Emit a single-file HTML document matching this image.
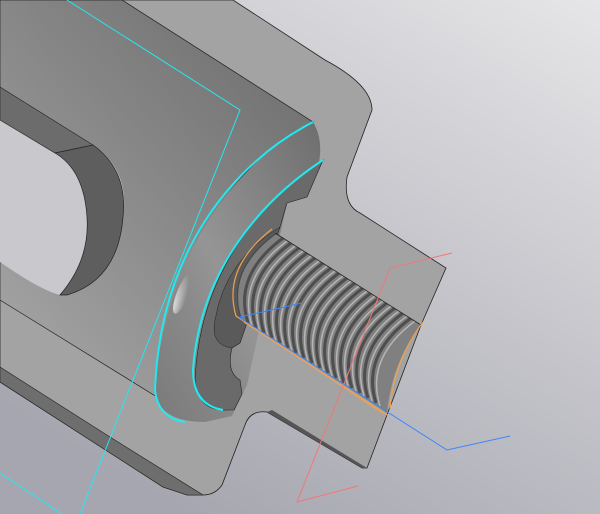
<!DOCTYPE html>
<html><head><style>html,body{margin:0;padding:0;overflow:hidden}svg{display:block}</style></head>
<body>
<svg width="600" height="514" viewBox="0 0 600 514" xmlns="http://www.w3.org/2000/svg">
<defs>
<linearGradient id="bg" x1="1" y1="0" x2="0.3" y2="1">
<stop offset="0" stop-color="#e6e6e8"/><stop offset="0.5" stop-color="#c4c4ca"/><stop offset="1" stop-color="#a6a6b0"/>
</linearGradient>
<linearGradient id="top" x1="0.8" y1="0.1" x2="0.1" y2="0.9">
<stop offset="0" stop-color="#737373"/><stop offset="1" stop-color="#a2a2a2"/>
</linearGradient>
<linearGradient id="ring" x1="1" y1="0" x2="0" y2="1">
<stop offset="0" stop-color="#6e6e6e"/><stop offset="0.55" stop-color="#959595"/><stop offset="0.7" stop-color="#8a8a8a"/><stop offset="1" stop-color="#7a7a7a"/>
</linearGradient>
<radialGradient id="hl" cx="0" cy="0" r="1">
<stop offset="0" stop-color="#f4f4f4"/><stop offset="1" stop-color="#f0f0f0" stop-opacity="0"/>
</radialGradient>
<clipPath id="bore"><path d="M275,233 L421,325 Q392,362 387,413 L240,318 Q225,270 275,233Z"/></clipPath>
</defs>
<rect width="600" height="514" fill="url(#bg)"/>
<path d="M0,0 L233,0 L325,60 Q372,85 372,110 L347,177 Q343,205 360,213 L446,268 L421,325 L387,415 L367,468 L362,468 L267,412 Q250,410 245,425 L222,485 Q215,495 203,495 L187,495 L163,487 L0,382Z" fill="#a3a3a3" stroke="#222" stroke-width="0.8"/>
<path d="M0,367 L110,437 L203,495 L187,495 L163,487 L0,382Z" fill="#6e6e6e" stroke="#222" stroke-width="0.6"/>
<path d="M267,412 L362,468 L367,468 L272,410Z" fill="#555"/>
<path d="M0,0 L122,0 L313,122 C250,150 170,240 157,397 L0,300Z" fill="url(#top)" stroke="#222" stroke-width="0.7"/>
<path d="M0,87 L93,145 Q130,170 123,217 Q115,280 67,295 L60,295 Q40,290 0,262Z" fill="#c8c8cd"/>
<path d="M0,87 L93,145 L55,153 L0,120Z" fill="#6c6c6c" stroke="#222" stroke-width="0.6"/>
<path d="M55,153 L93,145 Q128,170 123,217 Q118,280 67,295 L60,295 Q90,260 87,217 Q84,170 55,153Z" fill="#5e5e5e" stroke="#222" stroke-width="0.7"/>
<path d="M313,122 C240,160 165,250 155,390 Q158,422 205,422 L232,416 L247,385 L287,203 L307,197 Q330,150 313,122Z" fill="url(#ring)"/>
<ellipse cx="0" cy="0" rx="1" ry="1" fill="url(#hl)" transform="translate(183,293) rotate(-68) scale(22,6)"/>
<path d="M323,160 C262,200 200,270 195,380 Q198,412 228,410 L234,410 L242,394 L240,380 Q226,372 232,348 L240,343 L280,227 L287,203 L307,197Z" fill="#6a6a6a" stroke="#222" stroke-width="0.6"/>
<path d="M280,227 Q225,260 215,320 Q210,345 232,348 L240,343Z" fill="#5a5a5a" stroke="#222" stroke-width="0.5"/>
<g clip-path="url(#bore)">
<rect x="200" y="200" width="250" height="250" fill="#808080"/>
<path d="M275,233 Q225,270 240,318" fill="none" stroke="#4a4a4a" stroke-width="3"/>
<g fill="none" stroke-width="3">
<path d="M283,238 Q233,275 248,323" stroke="#4e4e4e"/><path d="M287,241 Q237,278 252,326" stroke="#b5b5b5" stroke-width="1.5"/>
<path d="M291,243 Q241,280 256,328" stroke="#4e4e4e"/><path d="M295,246 Q245,283 260,331" stroke="#b5b5b5" stroke-width="1.5"/>
<path d="M299,248 Q249,285 264,333" stroke="#4e4e4e"/><path d="M303,251 Q253,288 268,336" stroke="#b5b5b5" stroke-width="1.5"/>
<path d="M307,253 Q257,290 272,338" stroke="#4e4e4e"/><path d="M311,256 Q261,293 276,341" stroke="#b5b5b5" stroke-width="1.5"/>
<path d="M315,258 Q265,295 280,343" stroke="#4e4e4e"/><path d="M319,261 Q269,298 284,346" stroke="#b5b5b5" stroke-width="1.5"/>
<path d="M323,263 Q273,300 288,348" stroke="#4e4e4e"/><path d="M327,266 Q277,303 292,351" stroke="#b5b5b5" stroke-width="1.5"/>
<path d="M331,268 Q281,305 296,353" stroke="#4e4e4e"/><path d="M335,271 Q285,308 300,356" stroke="#b5b5b5" stroke-width="1.5"/>
<path d="M339,273 Q289,310 304,358" stroke="#4e4e4e"/><path d="M343,276 Q293,313 308,361" stroke="#b5b5b5" stroke-width="1.5"/>
<path d="M347,278 Q297,315 312,363" stroke="#4e4e4e"/><path d="M351,281 Q301,318 316,366" stroke="#b5b5b5" stroke-width="1.5"/>
<path d="M355,283 Q305,320 320,368" stroke="#4e4e4e"/><path d="M359,286 Q309,323 324,371" stroke="#b5b5b5" stroke-width="1.5"/>
<path d="M363,288 Q313,325 328,373" stroke="#4e4e4e"/><path d="M367,291 Q317,328 332,376" stroke="#b5b5b5" stroke-width="1.5"/>
<path d="M371,293 Q321,330 336,378" stroke="#4e4e4e"/><path d="M375,296 Q325,333 340,381" stroke="#b5b5b5" stroke-width="1.5"/>
<path d="M379,298 Q329,335 344,383" stroke="#4e4e4e"/><path d="M383,301 Q333,338 348,386" stroke="#b5b5b5" stroke-width="1.5"/>
<path d="M387,303 Q337,340 352,388" stroke="#4e4e4e"/><path d="M391,306 Q341,343 356,391" stroke="#b5b5b5" stroke-width="1.5"/>
<path d="M395,308 Q345,345 360,393" stroke="#4e4e4e"/><path d="M399,311 Q349,348 364,396" stroke="#b5b5b5" stroke-width="1.5"/>
<path d="M403,313 Q353,350 368,398" stroke="#4e4e4e"/><path d="M407,316 Q357,353 372,401" stroke="#b5b5b5" stroke-width="1.5"/>
<path d="M411,318 Q361,355 376,403" stroke="#4e4e4e"/><path d="M415,321 Q365,358 380,406" stroke="#b5b5b5" stroke-width="1.5"/>
</g>
</g>
<line x1="275" y1="233" x2="421" y2="325" stroke="#222" stroke-width="0.8"/>
<g fill="none" stroke="#f0a050" stroke-width="1.2">
<path d="M272,229 Q222,268 236,316 L384,414"/>
<path d="M244,322 L389,416"/>
<path d="M423,322 Q393,362 390,410"/>
</g>
<g fill="none" stroke="#22e8f0">
<path d="M67,0 L240,110 L80,514" stroke-width="1"/>
<path d="M0,473 L62,514" stroke-width="1"/>
<path d="M313,122 C235,162 160,250 155,390 Q158,418 185,422" stroke-width="2"/>
<path d="M323,160 C262,200 200,270 193,370 Q193,405 223,410" stroke-width="2"/>
</g>
<g fill="none" stroke="#3a86ff" stroke-width="1">
<path d="M240,317 L302,303"/>
<path d="M240,318 L447,450 L510,436"/>
</g>
<path d="M452,253 L390,268 L297,502 L358,486" fill="none" stroke="#f07878" stroke-width="1"/>
</svg>
</body></html>
